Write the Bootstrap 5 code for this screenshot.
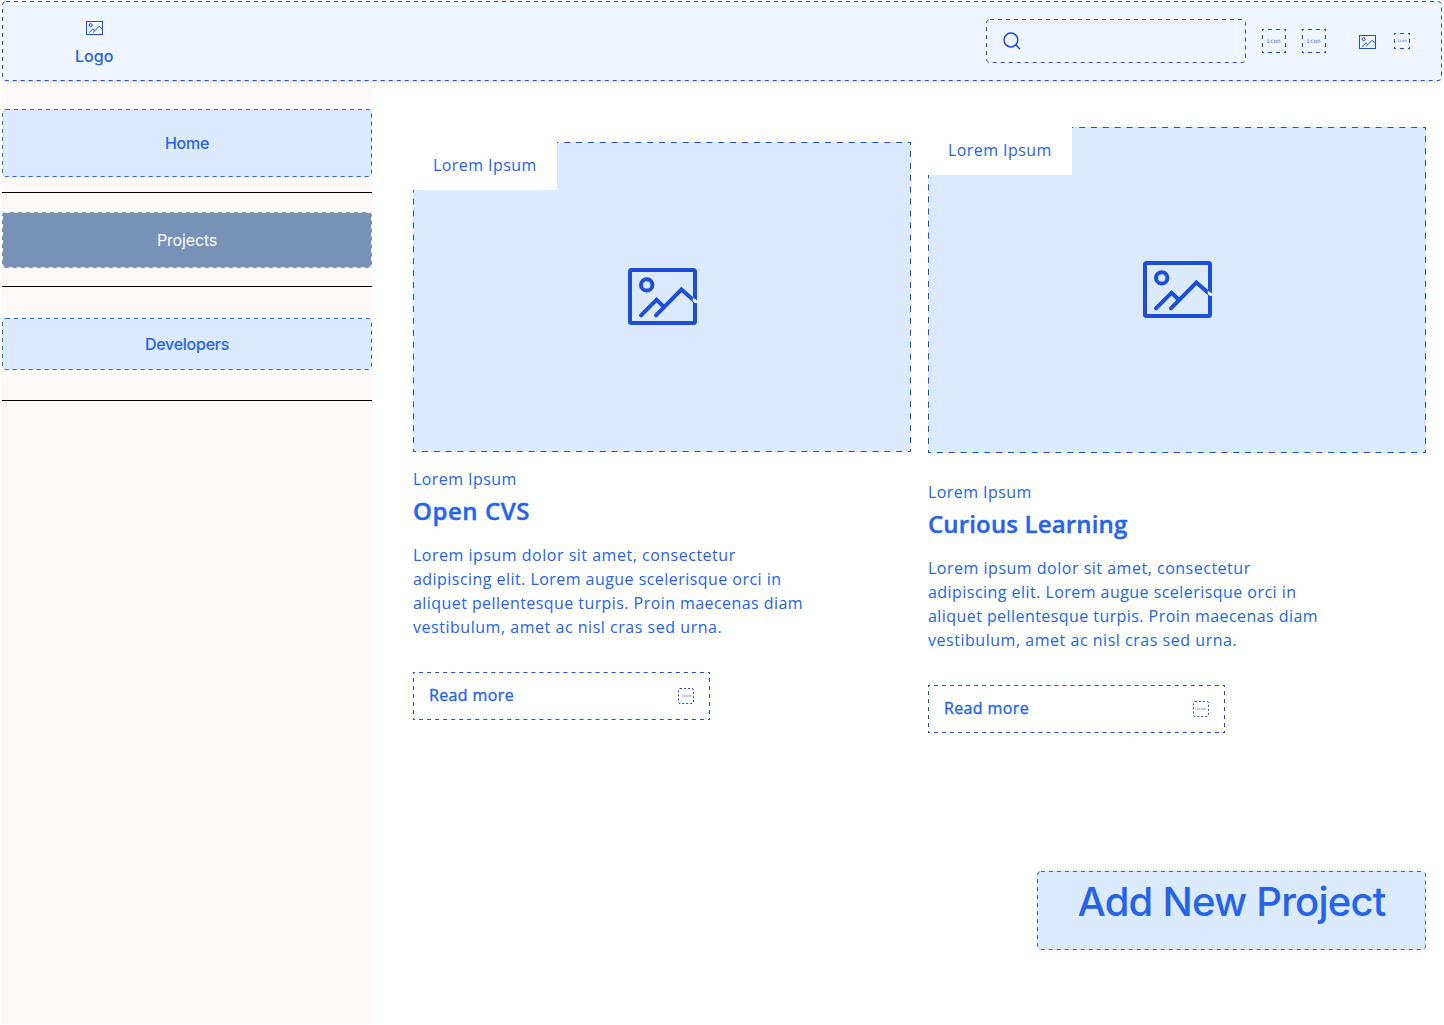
<!DOCTYPE html>
<html lang="en">
<head>
<meta charset="utf-8">
<meta name="viewport" content="width=device-width, initial-scale=1">
<title>Projects</title>
<link href="https://cdn.jsdelivr.net/npm/bootstrap@5.3.0/dist/css/bootstrap.min.css" rel="stylesheet">
<style>
  :root { --ink: #2563eb; --edge: #1d4ed8; --pane: #dbeafe; --bar: #eff6ff; }
  body { font-family: Inter, "Liberation Sans", sans-serif; color: var(--ink); width: 1444px; height: 1025px; overflow: hidden; background: #fff; padding: 1px 2px; }
  a { color: inherit; text-decoration: none; }
  /* dashed frames */
  .frame { position: relative; }
  .dash { position: absolute; inset: 0; width: 100%; height: 100%; fill: none; stroke: var(--edge); stroke-width: 1; pointer-events: none; overflow: visible; }
  .dash rect { x: .5px; y: .5px; width: calc(100% - 1px); height: calc(100% - 1px); rx: 3.5px; stroke-dasharray: 4 4; }
  .dash line { stroke-dasharray: 1 1; stroke-dashoffset: .5; }
  .dash .b { transform: translateY(-1px); }
  .dash .r { transform: translateX(-1px); }
  /* top bar */
  .topbar { height: 80px; background: var(--bar); border-radius: 4px; box-shadow: 0 1px 2px rgba(0,0,0,.12); padding: 0 32px 0 73px; z-index: 2; }
  .brand { font-size: 16px; font-weight: 450; line-height: 24px; gap: 9px; padding-top: 7px; }
  .search-box { width: 260px; height: 44px; padding-left: 16px; }
  .ico { font-family: "DejaVu Sans Mono", monospace; color: #4a72df; line-height: 1; flex: none; }
  .ico-24 { width: 24px; height: 24px; font-size: 6px; padding-right: 1px; }
  .ico-16 { width: 16px; height: 16px; font-size: 4px; }
  .ico-round rect { rx: 1.5px; stroke-dasharray: 2 2; }
  /* side menu */
  .side { width: 370px; height: 943px; background: #fdf9f8; padding-top: 28px; flex: none; }
  .side a { font-size: 16px; font-weight: 450; letter-spacing: -.25px; background: var(--pane); border-radius: 4px; }
  .side .dash { stroke: var(--ink); }
  .side a.current { background: #7892b7; color: #fff; font-weight: 400; letter-spacing: -.15px; }
  .side a.current .dash { stroke: #fff; }
  .rule { height: 1px; background: #000; }
  .h-home { height: 68px; margin-bottom: 15px; }
  .h-proj { height: 56px; margin: 19px 0 18px; }
  .h-dev { height: 52px; margin: 31px 0 30px; }
  /* cards */
  .work { font-family: "Open Sans", "Noto Sans", sans-serif; }
  .cards { gap: 17px; padding-left: 41px; height: 790px; }
  .project { width: 498px; font-size: 16px; line-height: 24px; }
  .project-a { padding-top: 61px; }
  .project-b { padding-top: 46px; }
  .project-a .hero { height: 310px; margin-bottom: 15px; }
  .project-b .hero { height: 326px; margin-bottom: 27px; }
  .hero { background: var(--pane); padding-bottom: 2px; }
  .tag { position: absolute; left: 0; top: 0; width: 144px; height: 48px; padding: 11px 20px; background: #fff; white-space: nowrap; }
  .title { font-size: 24px; font-weight: 600; line-height: 36px; margin: 2px 0 14px; -webkit-text-stroke: .4px var(--ink); }
  .copy { margin: 0 0 33px; white-space: nowrap; }
  .w-lbl { letter-spacing: .43px; }
  .w-t1 { letter-spacing: .55px; }
  .w-t2 { letter-spacing: .15px; }
  .w-1 { letter-spacing: .51px; }
  .w-2 { letter-spacing: .455px; }
  .w-3 { letter-spacing: .435px; }
  .w-4 { letter-spacing: .53px; }
  .w-m { letter-spacing: .37px; -webkit-text-stroke: .35px var(--ink); padding-bottom: 2px; }
  .more { width: 297px; height: 48px; padding: 0 16px; }
  .add { width: 389px; height: 79px; background: var(--pane); border-radius: 4px; font-size: 40px; font-weight: 500; letter-spacing: -.78px; line-height: 48px; padding-top: 7px; margin-right: 16px; }
  .add .dash { stroke: var(--ink); }
</style>
</head>
<body>
<svg width="0" height="0" class="position-absolute">
  <symbol id="pic" viewBox="0 0 69 57">
    <g fill="none" stroke="#1d4ed8" stroke-width="4">
      <rect x="2" y="2" width="65" height="53" rx="1.5"/>
      <circle cx="18.7" cy="16.9" r="5.7"/>
      <path d="M13 47.3 28.6 31.7 35.8 38.7M28 47.3 53.4 21.6 66 32.4" stroke-linecap="round"/>
    </g>
    <path d="M64.8 29.6 69 32.6V35H67L64.8 33z" fill="#eff6ff"/>
  </symbol>
  <symbol id="pic-s" viewBox="0 0 17 14">
    <g fill="none" stroke="#1d4ed8">
      <rect x=".5" y=".5" width="16" height="13"/>
      <circle cx="4.6" cy="4.1" r="1.5" stroke-width="1"/>
      <path d="M3.2 11.6 7 7.8 8.8 9.5M6.8 11.6 13.2 5.3 16.3 8" stroke-width="1"/>
    </g>
  </symbol>
</svg>

<header class="topbar frame d-flex align-items-center justify-content-between">
  <a href="#" class="brand d-flex flex-column align-items-center">
    <svg width="17" height="14"><use href="#pic-s"/></svg>
    <span>Logo</span>
  </a>
  <div class="d-flex align-items-center">
    <div class="search-box frame d-flex align-items-center">
      <svg width="20" height="20" viewBox="0 0 20 20" fill="none" stroke="#1d4ed8" stroke-width="1.5"><circle cx="8.9" cy="9" r="6.9"/><path d="M13.7 13.7 18 18.2"/></svg>
      <svg class="dash"><rect/></svg>
    </div>
    <span class="ico ico-24 frame d-flex align-items-center justify-content-center ms-3">icon
      <svg class="dash"><line x1="0" y1=".5" x2="100%" y2=".5" pathLength="6"/><line class="b" x1="0" y1="24.5" x2="100%" y2="24.5" pathLength="6"/><line x1=".5" y1="0" x2=".5" y2="100%" pathLength="6"/><line class="r" x1="24.5" y1="0" x2="24.5" y2="100%" pathLength="6"/></svg>
    </span>
    <span class="ico ico-24 frame d-flex align-items-center justify-content-center ms-3">icon
      <svg class="dash"><line x1="0" y1=".5" x2="100%" y2=".5" pathLength="6"/><line class="b" x1="0" y1="24.5" x2="100%" y2="24.5" pathLength="6"/><line x1=".5" y1="0" x2=".5" y2="100%" pathLength="6"/><line class="r" x1="24.5" y1="0" x2="24.5" y2="100%" pathLength="6"/></svg>
    </span>
    <svg width="17" height="14" style="margin:2px 18px 0 33px"><use href="#pic-s"/></svg>
    <span class="ico ico-16 frame d-flex align-items-center justify-content-center">icon
      <svg class="dash"><line x1="0" y1=".5" x2="100%" y2=".5" pathLength="4"/><line class="b" x1="0" y1="16.5" x2="100%" y2="16.5" pathLength="4"/><line x1=".5" y1="0" x2=".5" y2="100%" pathLength="4"/><line class="r" x1="16.5" y1="0" x2="16.5" y2="100%" pathLength="4"/></svg>
    </span>
  </div>
  <svg class="dash"><rect/></svg>
</header>

<div class="d-flex">
  <nav class="side">
    <a href="#" class="h-home frame d-flex align-items-center justify-content-center">Home<svg class="dash"><rect/></svg></a>
    <div class="rule"></div>
    <a href="#" class="current h-proj frame d-flex align-items-center justify-content-center">Projects<svg class="dash"><rect/></svg></a>
    <div class="rule"></div>
    <a href="#" class="h-dev frame d-flex align-items-center justify-content-center">Developers<svg class="dash"><rect/></svg></a>
    <div class="rule"></div>
  </nav>

  <main class="flex-grow-1">
    <div class="cards work d-flex">
      <article class="project project-a">
        <div class="hero frame d-flex align-items-center justify-content-center">
          <svg width="69" height="57"><use href="#pic"/></svg>
          <svg class="dash"><line x1="0" y1=".5" x2="100%" y2=".5" pathLength="84"/><line class="b" x1="0" y1="310.5" x2="100%" y2="310.5" pathLength="84"/><line x1=".5" y1="0" x2=".5" y2="100%" pathLength="52"/><line class="r" x1="498.5" y1="0" x2="498.5" y2="100%" pathLength="52"/></svg>
          <span class="tag"><span class="w-lbl">Lorem Ipsum</span></span>
        </div>
        <div><span class="w-lbl">Lorem Ipsum</span></div>
        <h2 class="title"><span class="w-t1">Open CVS</span></h2>
        <p class="copy"><span class="w-1">Lorem ipsum dolor sit amet, consectetur</span><br><span class="w-2">adipiscing elit. Lorem augue scelerisque orci in</span><br><span class="w-3">aliquet pellentesque turpis. Proin maecenas diam</span><br><span class="w-4">vestibulum, amet ac nisl cras sed urna.</span></p>
        <a href="#" class="more frame d-flex align-items-center justify-content-between"><span class="w-m">Read more</span>
          <span class="ico ico-16 ico-round frame d-flex align-items-center justify-content-center">icon<svg class="dash"><rect/></svg></span>
          <svg class="dash"><line x1="0" y1=".5" x2="100%" y2=".5" pathLength="74"/><line class="b" x1="0" y1="48.5" x2="100%" y2="48.5" pathLength="74"/><line x1=".5" y1="0" x2=".5" y2="100%" pathLength="12"/><line class="r" x1="297.5" y1="0" x2="297.5" y2="100%" pathLength="12"/></svg>
        </a>
      </article>
      <article class="project project-b">
        <div class="hero frame d-flex align-items-center justify-content-center">
          <svg width="69" height="57"><use href="#pic"/></svg>
          <svg class="dash"><line x1="0" y1=".5" x2="100%" y2=".5" pathLength="84"/><line class="b" x1="0" y1="326.5" x2="100%" y2="326.5" pathLength="84"/><line x1=".5" y1="0" x2=".5" y2="100%" pathLength="54"/><line class="r" x1="498.5" y1="0" x2="498.5" y2="100%" pathLength="54"/></svg>
          <span class="tag"><span class="w-lbl">Lorem Ipsum</span></span>
        </div>
        <div><span class="w-lbl">Lorem Ipsum</span></div>
        <h2 class="title"><span class="w-t2">Curious Learning</span></h2>
        <p class="copy"><span class="w-1">Lorem ipsum dolor sit amet, consectetur</span><br><span class="w-2">adipiscing elit. Lorem augue scelerisque orci in</span><br><span class="w-3">aliquet pellentesque turpis. Proin maecenas diam</span><br><span class="w-4">vestibulum, amet ac nisl cras sed urna.</span></p>
        <a href="#" class="more frame d-flex align-items-center justify-content-between"><span class="w-m">Read more</span>
          <span class="ico ico-16 ico-round frame d-flex align-items-center justify-content-center">icon<svg class="dash"><rect/></svg></span>
          <svg class="dash"><line x1="0" y1=".5" x2="100%" y2=".5" pathLength="74"/><line class="b" x1="0" y1="48.5" x2="100%" y2="48.5" pathLength="74"/><line x1=".5" y1="0" x2=".5" y2="100%" pathLength="12"/><line class="r" x1="297.5" y1="0" x2="297.5" y2="100%" pathLength="12"/></svg>
        </a>
      </article>
    </div>
    <a href="#" class="add frame d-block ms-auto text-center">Add New Project<svg class="dash"><rect/></svg></a>
  </main>
</div>
<script src="https://cdn.jsdelivr.net/npm/bootstrap@5.3.0/dist/js/bootstrap.bundle.min.js"></script>
</body>
</html>
